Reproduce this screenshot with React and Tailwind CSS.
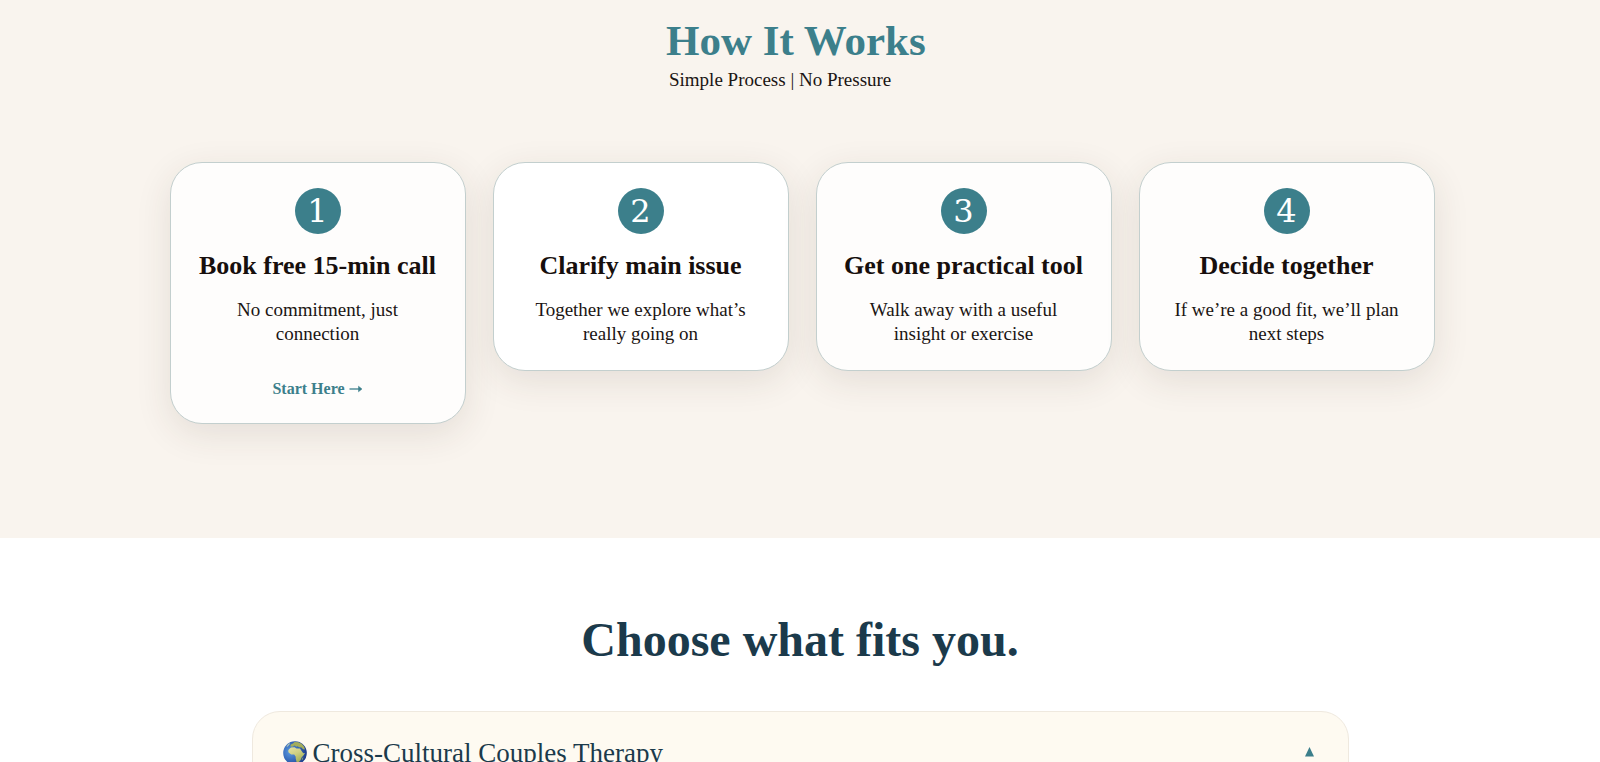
import clsx from 'clsx'

const steps = [
  { title: 'Book free 15-min call', text: 'No commitment, just connection', cta: 'Start Here' },
  { title: 'Clarify main issue', text: 'Together we explore what’s really going on', active: true },
  { title: 'Get one practical tool', text: 'Walk away with a useful insight or exercise' },
  { title: 'Decide together', text: 'If we’re a good fit, we’ll plan next steps' },
]

function StepCard({ number, title, text, cta, active }) {
  return (
    <li
      className={clsx(
        'flex flex-col items-center rounded-[32px] border border-[#c3cfce] px-6 pt-[25px] pb-6 text-center shadow-[0_10px_36px_rgba(60,50,40,0.11)]',
        active ? 'bg-white' : 'bg-[#fefdfc]'
      )}
    >
      <span className="flex size-[46px] items-center justify-center rounded-full bg-[#3c7f8b] font-['DejaVu_Serif',serif] text-[32px] leading-none text-white">
        {number}
      </span>
      <h3 className="mt-[14px] text-[26px] leading-9 font-bold whitespace-nowrap text-[#170f0d]">{title}</h3>
      <p className="mt-[14px] max-w-[236px] text-[19px] leading-6 text-[#1b1513]">{text}</p>
      {cta && (
        <a href="#book" className="mt-8 flex items-center gap-1 text-[16px] leading-[21px] font-bold text-[#3c7f8b] hover:underline">
          {cta}
          <svg viewBox="0 0 14 10" className="h-[10px] w-[14px]" fill="none" stroke="currentColor" aria-hidden="true">
            <path d="M0.5 5H12" strokeWidth="1.3" />
            <path d="M9.5 2.2L13 5L9.5 7.8Z" fill="currentColor" strokeWidth="0.5" />
          </svg>
        </a>
      )}
    </li>
  )
}

function Globe() {
  return (
    <svg viewBox="0 0 24 24" className="size-6 shrink-0" aria-hidden="true">
      <defs>
        <radialGradient id="sea" cx="0.3" cy="0.45" r="0.75">
          <stop offset="0" stopColor="#5d9be0" />
          <stop offset="0.5" stopColor="#3568b8" />
          <stop offset="1" stopColor="#1a3580" />
        </radialGradient>
        <linearGradient id="land" x1="0" y1="0" x2="0.6" y2="1">
          <stop offset="0" stopColor="#e6e2a4" />
          <stop offset="0.5" stopColor="#cfd083" />
          <stop offset="1" stopColor="#9fae58" />
        </linearGradient>
      </defs>
      <circle cx="12" cy="12" r="11.8" fill="url(#sea)" />
      <path d="M7.4 5.6L7.8 3.6L10 2.6L11.6 1L15.4 1.2L18.6 2.8L21 5.6L22 8.4L20 8.2L18.4 6.4L16 6.2L14.6 5.2L13.4 5.8L11.6 4.6L9.6 5.8Z" fill="#a3ad5c" />
      <path d="M6 8.2L8 6.6L11.6 6.2L13.4 7.4L17 7.4L18.6 10L20.2 12.2L22 12L20.4 14.6L18.6 16.4L17.6 19L15.4 21.4L13.6 21L12.8 18L12.6 15.4L11.2 13.4L8.2 13.4L5.6 11.6L5.2 9.8Z" fill="url(#land)" />
      <path d="M19.4 17L20.4 16.2L19.8 18.4L18.8 19Z" fill="#9fae58" />
      <path d="M3.4 5.4L5.4 3L7.2 2L6.4 3.8L4.4 5.8Z" fill="#b9cbb4" />
    </svg>
  )
}

export default function App() {
  return (
    <main className="bg-white font-['Liberation_Serif',serif]">
      <section className="bg-[#f9f4ee] pt-[15px] pb-[114px]">
        <header className="mx-auto w-[268px]">
          <h2 className="text-[43px] leading-[52px] font-bold whitespace-nowrap text-[#3c7f8b]">How It Works</h2>
          <p className="mt-px pl-[3px] text-[19px] leading-6 whitespace-nowrap text-[#1b1513]">Simple Process | No Pressure</p>
        </header>
        <div className="mt-[70px] pr-6 pl-7">
          <ol className="mx-auto grid max-w-[1265px] items-start gap-[27px] sm:grid-cols-2 lg:grid-cols-4">
            {steps.map((step, i) => (
              <StepCard key={step.title} number={i + 1} {...step} />
            ))}
          </ol>
        </div>
      </section>

      <section className="px-6 pt-[70px]">
        <h2 className="text-center text-[48px] leading-[64px] font-bold text-[#1b3a4b]">Choose what fits you.</h2>
        <div className="mx-auto mt-[39px] max-w-[1097px] rounded-[28px] border border-[#efe9df] bg-[#fefaf1]">
          <button type="button" aria-expanded="true" className="flex w-full items-center justify-between px-[30px] pt-[23px] pb-6 text-left text-[#1b3a4b]">
            <span className="flex items-center gap-[6px] text-[27px] leading-9">
              <Globe />
              Cross-Cultural Couples Therapy
            </span>
            <span className="text-[#3c7f8b]">
              <svg viewBox="0 0 16 16" className="size-4" fill="currentColor" aria-hidden="true">
                <path d="M7.5 2L12 11.5H3Z" />
              </svg>
            </span>
          </button>
        </div>
      </section>
    </main>
  )
}
